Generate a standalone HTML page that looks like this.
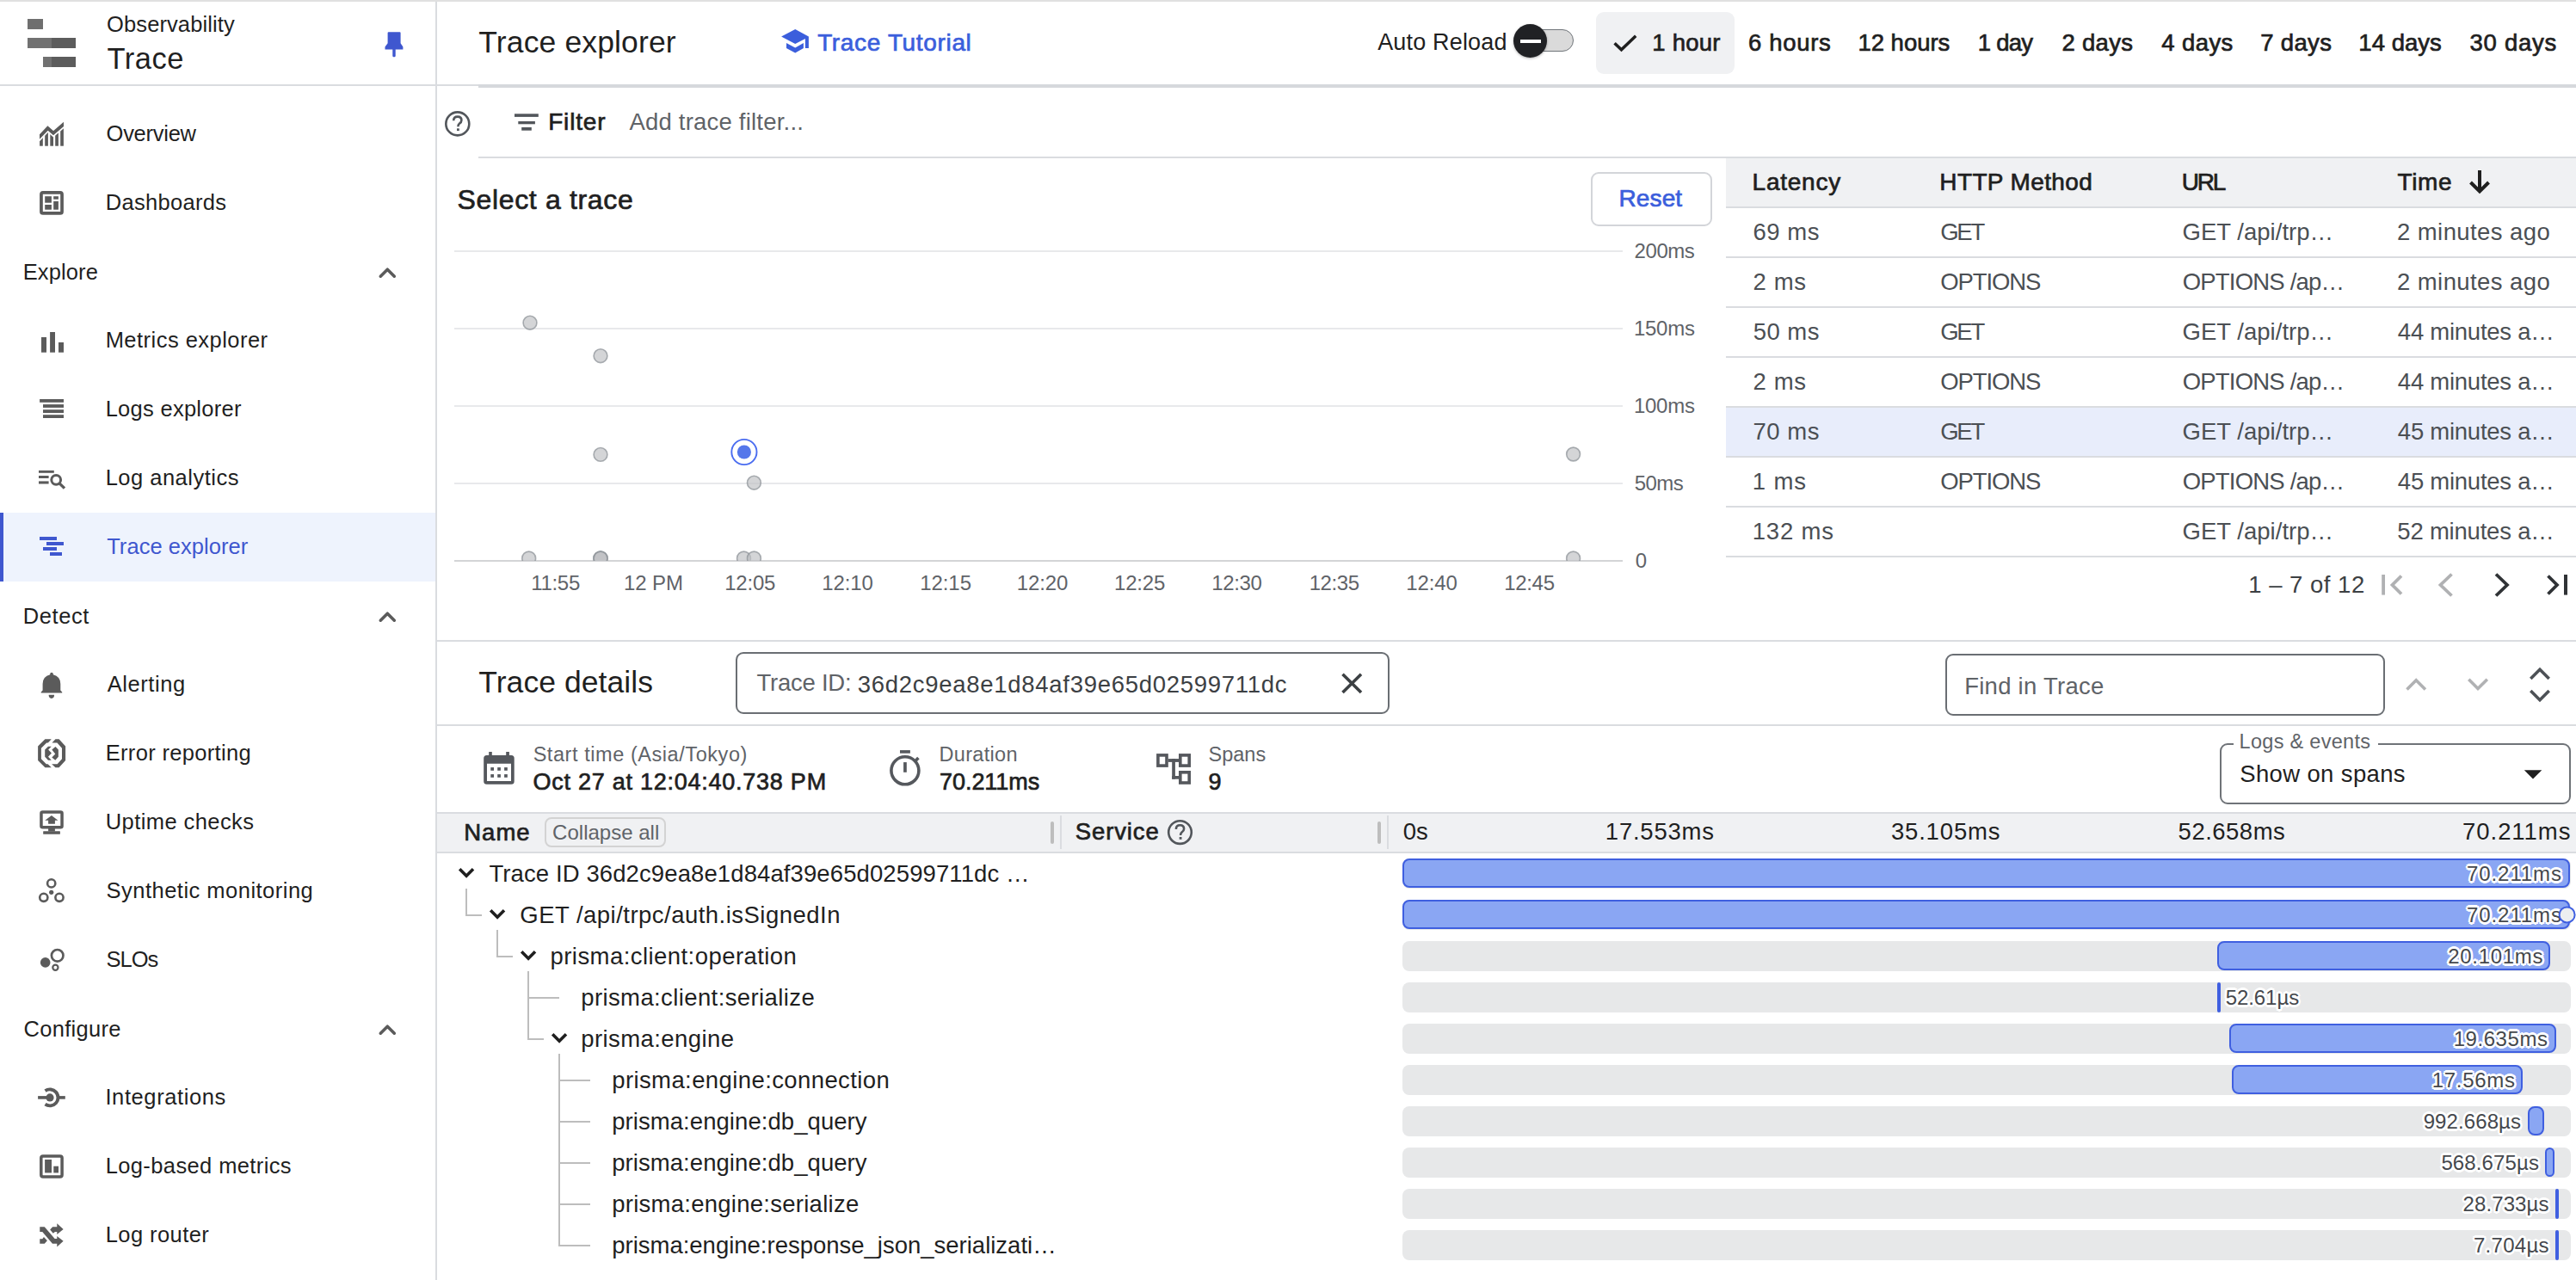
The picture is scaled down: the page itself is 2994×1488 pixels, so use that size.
<!DOCTYPE html>
<html><head><meta charset="utf-8"><style>
html,body{margin:0;padding:0;background:#fff;}
body{width:2994px;height:1488px;overflow:hidden;position:relative;font-family:"Liberation Sans",sans-serif;}
.t{position:absolute;white-space:nowrap;line-height:1;}
.r{position:absolute;}
.ol{text-shadow:2.6px 0 0 #fff,-2.6px 0 0 #fff,0 2.6px 0 #fff,0 -2.6px 0 #fff,1.9px 1.9px 0 #fff,-1.9px 1.9px 0 #fff,1.9px -1.9px 0 #fff,-1.9px -1.9px 0 #fff,1.3px 0 0 #fff,-1.3px 0 0 #fff,0 1.3px 0 #fff,0 -1.3px 0 #fff;}
#ic{position:absolute;left:0;top:0;}
</style></head><body>
<div class="r" style="left:0px;top:0px;width:2994.00px;height:2.00px;background:#e0e0e0;"></div>
<div class="r" style="left:506px;top:2px;width:2.00px;height:1486.00px;background:#dadce0;"></div>
<div class="r" style="left:0px;top:98px;width:556.00px;height:2.00px;background:#dadce0;"></div>
<div class="t" style="top:16.21px;font-size:25.5px;color:#1f1f1f;letter-spacing:0.105px;left:124.05px;">Observability</div>
<div class="t" style="top:51.29px;font-size:34.5px;color:#1f1f1f;letter-spacing:0.526px;left:124.51px;">Trace</div>
<div class="r" style="left:0px;top:596px;width:506.00px;height:80.00px;background:#eef3fd;"></div>
<div class="r" style="left:0px;top:596px;width:4.00px;height:80.00px;background:#3f57cf;"></div>
<div class="t" style="top:143.41px;font-size:25.5px;color:#1f1f1f;letter-spacing:-0.255px;left:123.55px;">Overview</div>
<div class="t" style="top:223.41px;font-size:25.5px;color:#1f1f1f;letter-spacing:0.321px;left:122.66px;">Dashboards</div>
<div class="t" style="top:304.21px;font-size:25.5px;color:#1f1f1f;letter-spacing:0.107px;left:26.76px;">Explore</div>
<div class="t" style="top:383.41px;font-size:25.5px;color:#1f1f1f;letter-spacing:0.468px;left:122.66px;">Metrics explorer</div>
<div class="t" style="top:463.41px;font-size:25.5px;color:#1f1f1f;letter-spacing:0.277px;left:122.66px;">Logs explorer</div>
<div class="t" style="top:543.41px;font-size:25.5px;color:#1f1f1f;letter-spacing:0.495px;left:122.66px;">Log analytics</div>
<div class="t" style="top:623.41px;font-size:25.5px;color:#3f57cf;letter-spacing:0.051px;left:124.19px;">Trace explorer</div>
<div class="t" style="top:704.21px;font-size:25.5px;color:#1f1f1f;letter-spacing:0.600px;left:26.76px;">Detect</div>
<div class="t" style="top:783.41px;font-size:25.5px;color:#1f1f1f;letter-spacing:0.573px;left:124.70px;">Alerting</div>
<div class="t" style="top:863.41px;font-size:25.5px;color:#1f1f1f;letter-spacing:0.332px;left:122.66px;">Error reporting</div>
<div class="t" style="top:943.41px;font-size:25.5px;color:#1f1f1f;letter-spacing:0.419px;left:122.79px;">Uptime checks</div>
<div class="t" style="top:1023.41px;font-size:25.5px;color:#1f1f1f;letter-spacing:0.483px;left:123.55px;">Synthetic monitoring</div>
<div class="t" style="top:1103.41px;font-size:25.5px;color:#1f1f1f;letter-spacing:-1.037px;left:123.55px;">SLOs</div>
<div class="t" style="top:1184.21px;font-size:25.5px;color:#1f1f1f;letter-spacing:0.297px;left:27.53px;">Configure</div>
<div class="t" style="top:1263.41px;font-size:25.5px;color:#1f1f1f;letter-spacing:0.605px;left:122.41px;">Integrations</div>
<div class="t" style="top:1343.41px;font-size:25.5px;color:#1f1f1f;letter-spacing:0.387px;left:122.66px;">Log-based metrics</div>
<div class="t" style="top:1423.41px;font-size:25.5px;color:#1f1f1f;letter-spacing:0.430px;left:122.66px;">Log router</div>
<div class="r" style="left:556px;top:98px;width:2438.00px;height:4.00px;background:#d6d8dc;"></div>
<div class="t" style="top:31.64px;font-size:35.5px;color:#1f1f1f;letter-spacing:0.143px;left:556.29px;">Trace explorer</div>
<div class="t" style="top:35.99px;font-size:28px;color:#3b5edc;letter-spacing:0.660px;left:950.14px;-webkit-text-stroke:0.7px #3b5edc;">Trace Tutorial</div>
<div class="t" style="top:36.14px;font-size:27px;color:#1f1f1f;letter-spacing:0.172px;left:1601.20px;">Auto Reload</div>
<div class="r" style="left:1764px;top:34.3px;width:63.10px;height:23.60px;border:1.8px solid #70757a;border-radius:14px;background:#dadada;"></div>
<div class="r" style="left:1759.1px;top:28.1px;width:39.4px;height:39.4px;border-radius:50%;background:#202124;box-shadow:0 1px 3px rgba(0,0,0,.3);"></div>
<div class="r" style="left:1767px;top:45.8px;width:24.00px;height:4.00px;background:#fff;"></div>
<div class="r" style="left:1855px;top:14.1px;width:161.00px;height:71.50px;border:0px solid transparent;border-radius:9px;background:#f0f1f3;"></div>
<div class="t" style="top:35.72px;font-size:27.5px;color:#1f1f1f;letter-spacing:0.243px;left:1920.34px;-webkit-text-stroke:0.7px #1f1f1f;">1 hour</div>
<div class="t" style="top:35.72px;font-size:27.5px;color:#1f1f1f;letter-spacing:0.704px;left:2031.92px;-webkit-text-stroke:0.7px #1f1f1f;">6 hours</div>
<div class="t" style="top:35.72px;font-size:27.5px;color:#1f1f1f;letter-spacing:-0.021px;left:2159.44px;-webkit-text-stroke:0.7px #1f1f1f;">12 hours</div>
<div class="t" style="top:35.72px;font-size:27.5px;color:#1f1f1f;letter-spacing:-0.744px;left:2298.74px;-webkit-text-stroke:0.7px #1f1f1f;">1 day</div>
<div class="t" style="top:35.72px;font-size:27.5px;color:#1f1f1f;letter-spacing:0.310px;left:2396.43px;-webkit-text-stroke:0.7px #1f1f1f;">2 days</div>
<div class="t" style="top:35.72px;font-size:27.5px;color:#1f1f1f;letter-spacing:0.405px;left:2512.25px;-webkit-text-stroke:0.7px #1f1f1f;">4 days</div>
<div class="t" style="top:35.72px;font-size:27.5px;color:#1f1f1f;letter-spacing:0.310px;left:2627.32px;-webkit-text-stroke:0.7px #1f1f1f;">7 days</div>
<div class="t" style="top:35.72px;font-size:27.5px;color:#1f1f1f;letter-spacing:0.023px;left:2741.34px;-webkit-text-stroke:0.7px #1f1f1f;">14 days</div>
<div class="t" style="top:35.72px;font-size:27.5px;color:#1f1f1f;letter-spacing:0.712px;left:2870.60px;-webkit-text-stroke:0.7px #1f1f1f;">30 days</div>
<div class="r" style="left:556px;top:182px;width:2438.00px;height:2.00px;background:#dadce0;"></div>
<div class="t" style="top:127.59px;font-size:28px;color:#1f1f1f;letter-spacing:0.840px;left:637.16px;-webkit-text-stroke:0.7px #1f1f1f;">Filter</div>
<div class="t" style="top:128.02px;font-size:27.5px;color:#5f6368;letter-spacing:0.210px;left:731.40px;">Add trace filter...</div>
<div class="t" style="top:216.41px;font-size:32px;color:#1f1f1f;letter-spacing:0.654px;left:531.56px;-webkit-text-stroke:0.7px #1f1f1f;">Select a trace</div>
<div class="r" style="left:1849.4px;top:200.3px;width:136.30px;height:59.10px;border:2px solid #d3d5d9;border-radius:9px;background:transparent;"></div>
<div class="t" style="top:217.19px;font-size:28px;color:#3b5edc;letter-spacing:0.125px;left:1881.51px;-webkit-text-stroke:0.7px #3b5edc;">Reset</div>
<div class="r" style="left:528px;top:291px;width:1358.00px;height:2.00px;background:#e8e9eb;"></div>
<div class="r" style="left:528px;top:381px;width:1358.00px;height:2.00px;background:#e8e9eb;"></div>
<div class="r" style="left:528px;top:471px;width:1358.00px;height:2.00px;background:#e8e9eb;"></div>
<div class="r" style="left:528px;top:561px;width:1358.00px;height:2.00px;background:#e8e9eb;"></div>
<div class="r" style="left:528px;top:651px;width:1358.00px;height:2.00px;background:#d3d4d6;"></div>
<div class="t" style="top:280.18px;font-size:24px;color:#5f6368;letter-spacing:-0.440px;left:1899.60px;">200ms</div>
<div class="t" style="top:370.18px;font-size:24px;color:#5f6368;letter-spacing:-0.290px;left:1899.00px;">150ms</div>
<div class="t" style="top:460.18px;font-size:24px;color:#5f6368;letter-spacing:-0.290px;left:1899.00px;">100ms</div>
<div class="t" style="top:550.18px;font-size:24px;color:#5f6368;letter-spacing:-0.593px;left:1899.84px;">50ms</div>
<div class="t" style="top:640.18px;font-size:24px;color:#5f6368;left:1900.80px;">0</div>
<div class="t" style="top:666.18px;font-size:24px;color:#5f6368;letter-spacing:-0.310px;left:617.20px;">11:55</div>
<div class="t" style="top:666.18px;font-size:24px;color:#5f6368;letter-spacing:-0.055px;left:724.90px;">12 PM</div>
<div class="t" style="top:666.18px;font-size:24px;color:#5f6368;letter-spacing:-0.210px;left:842.20px;">12:05</div>
<div class="t" style="top:666.18px;font-size:24px;color:#5f6368;letter-spacing:-0.115px;left:955.20px;">12:10</div>
<div class="t" style="top:666.18px;font-size:24px;color:#5f6368;letter-spacing:-0.060px;left:1069.20px;">12:15</div>
<div class="t" style="top:666.18px;font-size:24px;color:#5f6368;letter-spacing:-0.115px;left:1181.80px;">12:20</div>
<div class="t" style="top:666.18px;font-size:24px;color:#5f6368;letter-spacing:-0.185px;left:1295.00px;">12:25</div>
<div class="t" style="top:666.18px;font-size:24px;color:#5f6368;letter-spacing:-0.340px;left:1408.20px;">12:30</div>
<div class="t" style="top:666.18px;font-size:24px;color:#5f6368;letter-spacing:-0.435px;left:1521.70px;">12:35</div>
<div class="t" style="top:666.18px;font-size:24px;color:#5f6368;letter-spacing:-0.090px;left:1634.20px;">12:40</div>
<div class="t" style="top:666.18px;font-size:24px;color:#5f6368;letter-spacing:-0.310px;left:1748.20px;">12:45</div>
<div class="r" style="left:2006px;top:184px;width:988.00px;height:56.00px;background:#f0f1f3;"></div>
<div class="r" style="left:2006px;top:240px;width:988.00px;height:2.00px;background:#dadce0;"></div>
<div class="t" style="top:197.89px;font-size:28px;color:#1f1f1f;letter-spacing:0.767px;left:2036.56px;-webkit-text-stroke:0.7px #1f1f1f;">Latency</div>
<div class="t" style="top:197.89px;font-size:28px;color:#1f1f1f;letter-spacing:0.362px;left:2254.36px;-webkit-text-stroke:0.7px #1f1f1f;">HTTP Method</div>
<div class="t" style="top:197.89px;font-size:28px;color:#1f1f1f;letter-spacing:-2.230px;left:2535.80px;-webkit-text-stroke:0.7px #1f1f1f;">URL</div>
<div class="t" style="top:197.89px;font-size:28px;color:#1f1f1f;letter-spacing:0.647px;left:2786.44px;-webkit-text-stroke:0.7px #1f1f1f;">Time</div>
<div class="r" style="left:2006px;top:472px;width:988.00px;height:58.00px;background:#e8edfb;"></div>
<div class="t" style="top:255.92px;font-size:27.5px;color:#4b4f54;letter-spacing:0.525px;left:2037.42px;">69 ms</div>
<div class="t" style="top:255.92px;font-size:27.5px;color:#4b4f54;letter-spacing:-2.244px;left:2255.22px;">GET</div>
<div class="t" style="top:255.92px;font-size:27.5px;color:#4b4f54;letter-spacing:0.023px;left:2536.53px;">GET /api/trp…</div>
<div class="t" style="top:255.92px;font-size:27.5px;color:#4b4f54;letter-spacing:0.415px;left:2786.03px;">2 minutes ago</div>
<div class="r" style="left:2006px;top:298px;width:988.00px;height:2.00px;background:#dadce0;"></div>
<div class="t" style="top:313.92px;font-size:27.5px;color:#4b4f54;letter-spacing:0.667px;left:2037.42px;">2 ms</div>
<div class="t" style="top:313.92px;font-size:27.5px;color:#4b4f54;letter-spacing:-1.146px;left:2255.36px;">OPTIONS</div>
<div class="t" style="top:313.92px;font-size:27.5px;color:#4b4f54;letter-spacing:-0.793px;left:2536.66px;">OPTIONS /ap…</div>
<div class="t" style="top:313.92px;font-size:27.5px;color:#4b4f54;letter-spacing:0.415px;left:2786.03px;">2 minutes ago</div>
<div class="r" style="left:2006px;top:356px;width:988.00px;height:2.00px;background:#dadce0;"></div>
<div class="t" style="top:371.92px;font-size:27.5px;color:#4b4f54;letter-spacing:0.456px;left:2037.70px;">50 ms</div>
<div class="t" style="top:371.92px;font-size:27.5px;color:#4b4f54;letter-spacing:-2.244px;left:2255.22px;">GET</div>
<div class="t" style="top:371.92px;font-size:27.5px;color:#4b4f54;letter-spacing:0.023px;left:2536.53px;">GET /api/trp…</div>
<div class="t" style="top:371.92px;font-size:27.5px;color:#4b4f54;letter-spacing:-0.256px;left:2786.85px;">44 minutes a…</div>
<div class="r" style="left:2006px;top:414px;width:988.00px;height:2.00px;background:#dadce0;"></div>
<div class="t" style="top:429.92px;font-size:27.5px;color:#4b4f54;letter-spacing:0.667px;left:2037.42px;">2 ms</div>
<div class="t" style="top:429.92px;font-size:27.5px;color:#4b4f54;letter-spacing:-1.146px;left:2255.36px;">OPTIONS</div>
<div class="t" style="top:429.92px;font-size:27.5px;color:#4b4f54;letter-spacing:-0.793px;left:2536.66px;">OPTIONS /ap…</div>
<div class="t" style="top:429.92px;font-size:27.5px;color:#4b4f54;letter-spacing:-0.256px;left:2786.85px;">44 minutes a…</div>
<div class="r" style="left:2006px;top:472px;width:988.00px;height:2.00px;background:#dadce0;"></div>
<div class="t" style="top:487.92px;font-size:27.5px;color:#4b4f54;letter-spacing:0.525px;left:2037.42px;">70 ms</div>
<div class="t" style="top:487.92px;font-size:27.5px;color:#4b4f54;letter-spacing:-2.244px;left:2255.22px;">GET</div>
<div class="t" style="top:487.92px;font-size:27.5px;color:#4b4f54;letter-spacing:0.023px;left:2536.53px;">GET /api/trp…</div>
<div class="t" style="top:487.92px;font-size:27.5px;color:#4b4f54;letter-spacing:-0.256px;left:2786.85px;">45 minutes a…</div>
<div class="r" style="left:2006px;top:530px;width:988.00px;height:2.00px;background:#dadce0;"></div>
<div class="t" style="top:545.92px;font-size:27.5px;color:#4b4f54;letter-spacing:0.896px;left:2036.74px;">1 ms</div>
<div class="t" style="top:545.92px;font-size:27.5px;color:#4b4f54;letter-spacing:-1.146px;left:2255.36px;">OPTIONS</div>
<div class="t" style="top:545.92px;font-size:27.5px;color:#4b4f54;letter-spacing:-0.793px;left:2536.66px;">OPTIONS /ap…</div>
<div class="t" style="top:545.92px;font-size:27.5px;color:#4b4f54;letter-spacing:-0.256px;left:2786.85px;">45 minutes a…</div>
<div class="r" style="left:2006px;top:588px;width:988.00px;height:2.00px;background:#dadce0;"></div>
<div class="t" style="top:603.92px;font-size:27.5px;color:#4b4f54;letter-spacing:0.805px;left:2036.74px;">132 ms</div>
<div class="t" style="top:603.92px;font-size:27.5px;color:#4b4f54;letter-spacing:0.023px;left:2536.53px;">GET /api/trp…</div>
<div class="t" style="top:603.92px;font-size:27.5px;color:#4b4f54;letter-spacing:-0.210px;left:2786.30px;">52 minutes a…</div>
<div class="r" style="left:2006px;top:646px;width:988.00px;height:2.00px;background:#dadce0;"></div>
<div class="t" style="top:665.72px;font-size:27.5px;color:#3c4043;letter-spacing:0.500px;left:2613.24px;">1 – 7 of 12</div>
<div class="r" style="left:508px;top:744px;width:2486.00px;height:2.00px;background:#dadce0;"></div>
<div class="t" style="top:776.34px;font-size:35.5px;color:#1f1f1f;letter-spacing:0.063px;left:556.29px;">Trace details</div>
<div class="r" style="left:855px;top:758px;width:755.50px;height:68.00px;border:2px solid #6a6e73;border-radius:9px;background:transparent;"></div>
<div class="t" style="top:780.22px;font-size:27.5px;color:#5f6368;letter-spacing:-0.238px;left:879.45px;">Trace ID:</div>
<div class="t" style="top:781.82px;font-size:27.5px;color:#3c4043;letter-spacing:0.719px;left:996.70px;">36d2c9ea8e1d84af39e65d02599711dc</div>
<div class="r" style="left:2260.5px;top:760px;width:507.00px;height:68.00px;border:2px solid #6a6e73;border-radius:9px;background:transparent;"></div>
<div class="t" style="top:784.02px;font-size:27.5px;color:#5f6368;letter-spacing:0.257px;left:2283.20px;">Find in Trace</div>
<div class="r" style="left:508px;top:842px;width:2486.00px;height:2.00px;background:#dadce0;"></div>
<div class="t" style="top:866.20px;font-size:23.5px;color:#5f6368;letter-spacing:0.562px;left:619.64px;">Start time (Asia/Tokyo)</div>
<div class="t" style="top:896.04px;font-size:27px;color:#1f1f1f;letter-spacing:0.747px;left:619.49px;-webkit-text-stroke:0.7px #1f1f1f;">Oct 27 at 12:04:40.738 PM</div>
<div class="t" style="top:865.90px;font-size:23.5px;color:#5f6368;letter-spacing:0.311px;left:1091.52px;">Duration</div>
<div class="t" style="top:895.74px;font-size:27px;color:#1f1f1f;letter-spacing:-0.064px;left:1092.05px;-webkit-text-stroke:0.7px #1f1f1f;">70.211ms</div>
<div class="t" style="top:865.90px;font-size:23.5px;color:#5f6368;left:1404.50px;">Spans</div>
<div class="t" style="top:895.74px;font-size:27px;color:#1f1f1f;left:1404.50px;-webkit-text-stroke:0.7px #1f1f1f;">9</div>
<div class="r" style="left:2580.2px;top:864.4px;width:403.90px;height:67.10px;border:2px solid #6f7378;border-radius:9px;background:transparent;"></div>
<div class="r" style="left:2595.7px;top:860px;width:168.30px;height:10.00px;background:#fff;"></div>
<div class="t" style="top:851.20px;font-size:23.5px;color:#5f6368;letter-spacing:0.293px;left:2602.62px;">Logs &amp; events</div>
<div class="t" style="top:885.92px;font-size:27.5px;color:#1f1f1f;letter-spacing:0.358px;left:2603.26px;">Show on spans</div>
<div class="r" style="left:508px;top:944px;width:2486.00px;height:2.00px;background:#dadce0;"></div>
<div class="r" style="left:508px;top:946px;width:2486.00px;height:44.00px;background:#f0f1f3;"></div>
<div class="r" style="left:508px;top:990px;width:2486.00px;height:2.00px;background:#dadce0;"></div>
<div class="t" style="top:953.52px;font-size:27.5px;color:#1f1f1f;letter-spacing:1.017px;left:539.20px;-webkit-text-stroke:0.7px #1f1f1f;">Name</div>
<div class="r" style="left:632.5px;top:950.3px;width:137.80px;height:31.20px;border:2px solid #d3d3d3;border-radius:8px;background:transparent;"></div>
<div class="t" style="top:955.88px;font-size:24px;color:#5f6368;letter-spacing:0.009px;left:642.10px;">Collapse all</div>
<div class="r" style="left:1221.3px;top:954.5px;width:3.70px;height:26.50px;background:#bdbdbd;border-radius:2px;"></div>
<div class="r" style="left:1232px;top:948px;width:2.00px;height:39.30px;background:#dadce0;"></div>
<div class="t" style="top:953.12px;font-size:27.5px;color:#1f1f1f;letter-spacing:0.877px;left:1249.76px;-webkit-text-stroke:0.7px #1f1f1f;">Service</div>
<div class="r" style="left:1601.3px;top:954.5px;width:3.70px;height:26.50px;background:#bdbdbd;border-radius:2px;"></div>
<div class="r" style="left:1612px;top:948px;width:2.00px;height:39.30px;background:#dadce0;"></div>
<div class="t" style="top:953.22px;font-size:27.5px;color:#1f1f1f;left:1630.80px;">0s</div>
<div class="t" style="top:953.22px;font-size:27.5px;color:#1f1f1f;letter-spacing:0.771px;left:1865.84px;">17.553ms</div>
<div class="t" style="top:953.22px;font-size:27.5px;color:#1f1f1f;letter-spacing:0.834px;left:2197.90px;">35.105ms</div>
<div class="t" style="top:953.22px;font-size:27.5px;color:#1f1f1f;letter-spacing:0.491px;left:2531.60px;">52.658ms</div>
<div class="t" style="top:953.22px;font-size:27.5px;color:#1f1f1f;letter-spacing:0.934px;left:2862.12px;">70.211ms</div>
<div class="t" style="top:1002.32px;font-size:27.5px;color:#1f1f1f;letter-spacing:0.103px;left:568.45px;">Trace ID 36d2c9ea8e1d84af39e65d02599711dc …</div>
<div class="t" style="top:1050.32px;font-size:27.5px;color:#1f1f1f;letter-spacing:0.479px;left:604.33px;">GET /api/trpc/auth.isSignedIn</div>
<div class="t" style="top:1098.32px;font-size:27.5px;color:#1f1f1f;letter-spacing:0.442px;left:639.51px;">prisma:client:operation</div>
<div class="t" style="top:1146.32px;font-size:27.5px;color:#1f1f1f;letter-spacing:0.392px;left:675.21px;">prisma:client:serialize</div>
<div class="t" style="top:1194.32px;font-size:27.5px;color:#1f1f1f;letter-spacing:0.427px;left:675.21px;">prisma:engine</div>
<div class="t" style="top:1242.32px;font-size:27.5px;color:#1f1f1f;letter-spacing:0.401px;left:711.21px;">prisma:engine:connection</div>
<div class="t" style="top:1290.32px;font-size:27.5px;color:#1f1f1f;letter-spacing:0.063px;left:711.21px;">prisma:engine:db_query</div>
<div class="t" style="top:1338.32px;font-size:27.5px;color:#1f1f1f;letter-spacing:0.063px;left:711.21px;">prisma:engine:db_query</div>
<div class="t" style="top:1386.32px;font-size:27.5px;color:#1f1f1f;letter-spacing:0.261px;left:711.21px;">prisma:engine:serialize</div>
<div class="t" style="top:1434.32px;font-size:27.5px;color:#1f1f1f;letter-spacing:-0.006px;left:711.21px;">prisma:engine:response_json_serializati…</div>
<div class="r" style="left:541px;top:1033px;width:2.00px;height:32.00px;background:#bdbdbd;"></div>
<div class="r" style="left:541px;top:1063px;width:19.00px;height:2.00px;background:#bdbdbd;"></div>
<div class="r" style="left:577px;top:1081px;width:2.00px;height:32.00px;background:#bdbdbd;"></div>
<div class="r" style="left:577px;top:1111px;width:19.00px;height:2.00px;background:#bdbdbd;"></div>
<div class="r" style="left:613px;top:1129px;width:2.00px;height:80.00px;background:#bdbdbd;"></div>
<div class="r" style="left:613px;top:1159px;width:37.00px;height:2.00px;background:#bdbdbd;"></div>
<div class="r" style="left:613px;top:1207px;width:19.00px;height:2.00px;background:#bdbdbd;"></div>
<div class="r" style="left:649px;top:1225px;width:2.00px;height:224.00px;background:#bdbdbd;"></div>
<div class="r" style="left:649px;top:1255px;width:37.00px;height:2.00px;background:#bdbdbd;"></div>
<div class="r" style="left:649px;top:1303px;width:37.00px;height:2.00px;background:#bdbdbd;"></div>
<div class="r" style="left:649px;top:1351px;width:37.00px;height:2.00px;background:#bdbdbd;"></div>
<div class="r" style="left:649px;top:1399px;width:37.00px;height:2.00px;background:#bdbdbd;"></div>
<div class="r" style="left:649px;top:1447px;width:37.00px;height:2.00px;background:#bdbdbd;"></div>
<div class="r" style="left:1629.8px;top:998.2px;width:1358.20px;height:35.20px;background:#e7e8e9;border-radius:8px;"></div>
<div class="r" style="left:1629.8px;top:998.2px;width:1353.20px;height:30.20px;border:2.5px solid #3f5fe0;border-radius:8px;background:#8aa6f3;"></div>
<div class="t ol" style="top:1004.08px;font-size:24px;color:#45484d;letter-spacing:0.909px;right:16.09px;">70.211ms</div>
<div class="r" style="left:1629.8px;top:1046.2px;width:1358.20px;height:35.20px;background:#e7e8e9;border-radius:8px;"></div>
<div class="r" style="left:1629.8px;top:1046.2px;width:1353.20px;height:30.20px;border:2.5px solid #3f5fe0;border-radius:8px;background:#8aa6f3;"></div>
<div class="t ol" style="top:1052.08px;font-size:24px;color:#45484d;letter-spacing:0.909px;right:16.09px;">70.211ms</div>
<div class="r" style="left:1629.8px;top:1094.2px;width:1358.20px;height:35.20px;background:#e7e8e9;border-radius:8px;"></div>
<div class="r" style="left:2576.7px;top:1094.2px;width:383.60px;height:30.20px;border:2.5px solid #3f5fe0;border-radius:8px;background:#8aa6f3;"></div>
<div class="t ol" style="top:1100.08px;font-size:24px;color:#45484d;letter-spacing:0.697px;right:37.80px;">20.101ms</div>
<div class="r" style="left:1629.8px;top:1142.2px;width:1358.20px;height:35.20px;background:#e7e8e9;border-radius:8px;"></div>
<div class="r" style="left:2576.7px;top:1142.2px;width:4.00px;height:35.20px;background:#3f5fe0;border-radius:2px;"></div>
<div class="t ol" style="top:1148.08px;font-size:24px;color:#45484d;letter-spacing:-0.053px;left:2586.64px;">52.61µs</div>
<div class="r" style="left:1629.8px;top:1190.2px;width:1358.20px;height:35.20px;background:#e7e8e9;border-radius:8px;"></div>
<div class="r" style="left:2591.3px;top:1190.2px;width:375.40px;height:30.20px;border:2.5px solid #3f5fe0;border-radius:8px;background:#8aa6f3;"></div>
<div class="t ol" style="top:1196.08px;font-size:24px;color:#45484d;letter-spacing:0.569px;right:32.43px;">19.635ms</div>
<div class="r" style="left:1629.8px;top:1238.2px;width:1358.20px;height:35.20px;background:#e7e8e9;border-radius:8px;"></div>
<div class="r" style="left:2593.5px;top:1238.2px;width:334.30px;height:30.20px;border:2.5px solid #3f5fe0;border-radius:8px;background:#8aa6f3;"></div>
<div class="t ol" style="top:1244.08px;font-size:24px;color:#45484d;letter-spacing:0.700px;right:70.30px;">17.56ms</div>
<div class="r" style="left:1629.8px;top:1286.2px;width:1358.20px;height:35.20px;background:#e7e8e9;border-radius:8px;"></div>
<div class="r" style="left:2938.2px;top:1286.2px;width:14.50px;height:30.20px;border:2.5px solid #3f5fe0;border-radius:8px;background:#8aa6f3;"></div>
<div class="t ol" style="top:1292.08px;font-size:24px;color:#45484d;letter-spacing:0.095px;right:63.91px;">992.668µs</div>
<div class="r" style="left:1629.8px;top:1334.2px;width:1358.20px;height:35.20px;background:#e7e8e9;border-radius:8px;"></div>
<div class="r" style="left:2958px;top:1334.2px;width:7.00px;height:30.20px;border:2.5px solid #3f5fe0;border-radius:8px;background:#8aa6f3;"></div>
<div class="t ol" style="top:1340.08px;font-size:24px;color:#45484d;letter-spacing:0.130px;right:42.87px;">568.675µs</div>
<div class="r" style="left:1629.8px;top:1382.2px;width:1358.20px;height:35.20px;background:#e7e8e9;border-radius:8px;"></div>
<div class="r" style="left:2970px;top:1382.2px;width:4.00px;height:35.20px;background:#3f5fe0;border-radius:2px;"></div>
<div class="t ol" style="top:1388.08px;font-size:24px;color:#45484d;letter-spacing:0.100px;right:31.40px;">28.733µs</div>
<div class="r" style="left:1629.8px;top:1430.2px;width:1358.20px;height:35.20px;background:#e7e8e9;border-radius:8px;"></div>
<div class="r" style="left:2970px;top:1430.2px;width:4.00px;height:35.20px;background:#3f5fe0;border-radius:2px;"></div>
<div class="t ol" style="top:1436.08px;font-size:24px;color:#45484d;letter-spacing:0.270px;right:31.23px;">7.704µs</div>
<svg id="ic" width="2994" height="1488" viewBox="0 0 2994 1488">
<rect x="32" y="22" width="18.00" height="12.00" rx="0" fill="#6f6f6f"/>
<rect x="32" y="44" width="28.00" height="12.00" rx="0" fill="#717171"/>
<rect x="60" y="44" width="28.00" height="12.00" rx="0" fill="#5c5c5c"/>
<rect x="50" y="66" width="10.00" height="12.00" rx="0" fill="#717171"/>
<rect x="60" y="66" width="28.00" height="12.00" rx="0" fill="#5c5c5c"/>
<path d="M451.6 37.2 H464.6 Q465.6 37.2 465.6 38.2 V50.3 L468.4 54.4 V57.5 H459.7 V65.5 L458 66.5 L456.3 65.5 V57.5 H447.5 V54.4 L450.6 50.3 V38.2 Q450.6 37.2 451.6 37.2 Z" fill="#3f57cf"/>
<rect x="46.1" y="155" width="3.70" height="14.70" rx="0" fill="#5b5b5b"/>
<rect x="52.2" y="149" width="3.70" height="20.70" rx="0" fill="#5b5b5b"/>
<rect x="58.3" y="151" width="3.70" height="18.70" rx="0" fill="#5b5b5b"/>
<rect x="64.2" y="149.5" width="3.70" height="20.20" rx="0" fill="#5b5b5b"/>
<rect x="70.2" y="144.6" width="3.70" height="25.10" rx="0" fill="#5b5b5b"/>
<defs><clipPath id="ovc"><rect x="46.1" y="130" width="27.8" height="45"/></clipPath></defs>
<g clip-path="url(#ovc)"><path d="M42 163.2 L55.5 149.05 L62 154.7 L78 140.9" fill="none" stroke="#fff" stroke-width="7.4"/><path d="M42 163.2 L55.5 149.05 L62 154.7 L78 140.9" fill="none" stroke="#5b5b5b" stroke-width="3.9"/></g>
<rect x="47.95" y="223.95" width="24.1" height="23.95" rx="2" fill="none" stroke="#5b5b5b" stroke-width="3.7"/>
<rect x="52.2" y="228.2" width="7.70" height="7.50" rx="0" fill="#5b5b5b"/>
<rect x="52.2" y="238" width="7.70" height="5.70" rx="0" fill="#5b5b5b"/>
<rect x="62.2" y="228.2" width="5.70" height="3.50" rx="0" fill="#5b5b5b"/>
<rect x="62.2" y="234" width="5.70" height="9.70" rx="0" fill="#5b5b5b"/>
<path d="M442.3 321.2 L450.3 313.2 L458.3 321.2" fill="none" stroke="#5b5b5b" stroke-width="3.6" stroke-linecap="round" stroke-linejoin="round"/>
<rect x="48" y="392" width="6.00" height="17.70" rx="0" fill="#5b5b5b"/>
<rect x="58.1" y="386" width="5.90" height="23.70" rx="0" fill="#5b5b5b"/>
<rect x="68" y="398" width="6.00" height="11.70" rx="0" fill="#5b5b5b"/>
<rect x="46.1" y="464" width="27.90" height="3.80" rx="0" fill="#5b5b5b"/>
<rect x="50" y="470.1" width="24.00" height="3.80" rx="0" fill="#5b5b5b"/>
<rect x="50" y="476.2" width="24.00" height="3.80" rx="0" fill="#5b5b5b"/>
<rect x="50" y="482.2" width="24.00" height="3.80" rx="0" fill="#5b5b5b"/>
<rect x="45" y="546.9" width="17.80" height="2.90" rx="0" fill="#5b5b5b"/>
<rect x="45" y="553" width="11.60" height="3.00" rx="0" fill="#5b5b5b"/>
<rect x="45" y="559.4" width="11.60" height="3.10" rx="0" fill="#5b5b5b"/>
<circle cx="65.2" cy="557.8" r="5.4" fill="none" stroke="#5b5b5b" stroke-width="3"/>
<path d="M68.8 561.6 L75 567.6" fill="none" stroke="#5b5b5b" stroke-width="3.4" />
<rect x="46" y="624" width="20.00" height="4.00" rx="0" fill="#3f57cf"/>
<rect x="54" y="630" width="20.00" height="4.00" rx="0" fill="#3f57cf"/>
<rect x="50" y="636" width="16.00" height="4.00" rx="0" fill="#3f57cf"/>
<rect x="58" y="642" width="14.00" height="4.00" rx="0" fill="#3f57cf"/>
<path d="M442.3 721.2 L450.3 713.2 L458.3 721.2" fill="none" stroke="#5b5b5b" stroke-width="3.6" stroke-linecap="round" stroke-linejoin="round"/>
<path d="M60 781.7 Q61.8 781.7 61.8 783.5 V784.3 Q70.3 786.5 70.3 795 V802.5 L72.2 804.5 V805.6 H47.7 V804.5 L49.6 802.5 V795 Q49.6 786.5 58.2 784.3 V783.5 Q58.2 781.7 60 781.7 Z" fill="#5b5b5b"/>
<path d="M56.6 807.8 H63.1 Q63.1 811.9 59.85 811.9 Q56.6 811.9 56.6 807.8 Z" fill="#5b5b5b"/>
<path d="M52.39 859.19 L59.76 859.19 L55.81 863.51 L54.19 863.51 L47.89 869.63 L47.89 882.22 L53.83 888.15 L55.63 888.15 L59.76 892.29 L52.39 892.29 L44.12 884.01 L44.12 867.47 Z" fill="#5b5b5b"/>
<path d="M64.44 859.19 L68.58 859.19 L76.13 867.47 L76.13 884.01 L68.58 892.29 L64.44 892.29 L60.12 888.15 L66.6 888.15 L71.99 882.22 L71.99 869.63 L66.42 863.51 L60.48 863.51 Z" fill="#5b5b5b"/>
<path d="M55.99 867.83 L59.76 867.83 L56.17 871.6 L59.94 875.56 L55.99 879.7 L59.76 883.83 L55.99 883.83 L52.21 879.7 L52.21 871.6 Z" fill="#5b5b5b"/>
<path d="M64.44 868.01 L67.86 871.6 L67.86 879.7 L64.26 883.83 L60.3 880.6 L64.26 876.46 L60.3 871.6 Z" fill="#5b5b5b"/>
<rect x="47.95" y="944" width="24.1" height="17.8" rx="1.5" fill="none" stroke="#5b5b5b" stroke-width="3.5"/>
<path d="M59.9 948.1 L67.5 953.75 H63.9 V957.7 H56.1 V953.75 H52.2 Z" fill="#5b5b5b"/>
<rect x="56.1" y="963" width="7.80" height="3.50" rx="0" fill="#5b5b5b"/>
<rect x="50.2" y="966.25" width="19.70" height="3.45" rx="0.5" fill="#5b5b5b"/>
<circle cx="59.7" cy="1026.9" r="4.6" fill="none" stroke="#5b5b5b" stroke-width="2.6"/>
<circle cx="50.8" cy="1043.3" r="4.6" fill="none" stroke="#5b5b5b" stroke-width="2.6"/>
<circle cx="69" cy="1043.3" r="4.6" fill="none" stroke="#5b5b5b" stroke-width="2.6"/>
<circle cx="59.7" cy="1037.3" r="2.6" fill="#5b5b5b"/>
<circle cx="52.7" cy="1118.9" r="5.8" fill="#5b5b5b"/>
<circle cx="66.7" cy="1110.8" r="6.8" fill="none" stroke="#5b5b5b" stroke-width="2.7"/>
<circle cx="64.4" cy="1124.8" r="3.1" fill="none" stroke="#5b5b5b" stroke-width="2.2"/>
<path d="M442.3 1201.2 L450.3 1193.2 L458.3 1201.2" fill="none" stroke="#5b5b5b" stroke-width="3.6" stroke-linecap="round" stroke-linejoin="round"/>
<rect x="44.1" y="1274.1" width="10.90" height="3.60" rx="0" fill="#5b5b5b"/>
<rect x="67" y="1274.1" width="8.80" height="3.60" rx="0" fill="#5b5b5b"/>
<circle cx="58" cy="1275.9" r="4.6" fill="#5b5b5b"/>
<path d="M52.55 1268.1 A 9.5 9.5 0 1 1 52.55 1283.7" fill="none" stroke="#5b5b5b" stroke-width="3.9" />
<rect x="47.8" y="1343.9" width="24.3" height="24" rx="2.2" fill="none" stroke="#5b5b5b" stroke-width="3.5"/>
<rect x="52.1" y="1348" width="7.90" height="15.40" rx="0" fill="#5b5b5b"/>
<rect x="62.3" y="1355.7" width="5.70" height="7.70" rx="0" fill="#5b5b5b"/>
<path d="M46.28 1426.25 L51.75 1426.25 L63.63 1440 L66.28 1440 L66.28 1436.9 L73.63 1442.8 L66.28 1449.4 L66.28 1445.8 L60.97 1445.8 L49.25 1431.9 L46.28 1431.9 Z" fill="#5b5b5b"/>
<path d="M58.16 1429.4 L61.13 1426.25 L66.28 1426.25 L66.28 1422.2 L73.63 1428.9 L66.28 1435 L66.28 1431.9 L63.94 1431.9 L61.75 1433.75 Z" fill="#5b5b5b"/>
<path d="M46.28 1440.2 L49.25 1440.2 L50.97 1438.1 L54.88 1442.2 L51.75 1445.8 L46.28 1445.8 Z" fill="#5b5b5b"/>
<path d="M908.1 42.4 L924.25 34.1 L939.9 42.4 V55.9 H935.9 V44.9 L924.25 51 Z" fill="#3b5edc"/>
<path d="M914 50 L924.25 55.6 L933.9 50 V55.9 L924.25 61.6 L914 55.9 Z" fill="#3b5edc"/>
<path d="M1876.6 50.2 L1884.5 57.8 L1901.2 41.8" fill="none" stroke="#1f1f1f" stroke-width="3.5" />
<circle cx="531.8" cy="143.9" r="13.5" fill="none" stroke="#52565b" stroke-width="2.6"/>
<path d="M527.2 140.2 Q527.2 135.6 531.9 135.6 Q536.4 135.6 536.4 139.8 Q536.4 142.2 534 143.6 Q532.4 144.6 532.4 147.3" fill="none" stroke="#52565b" stroke-width="2.6" />
<rect x="531" y="149.3" width="2.80" height="2.80" rx="0" fill="#52565b"/>
<rect x="598" y="132.3" width="27.80" height="3.60" rx="0" fill="#52565b"/>
<rect x="602.3" y="141" width="19.60" height="3.30" rx="0" fill="#52565b"/>
<rect x="606.2" y="148" width="11.60" height="3.70" rx="0" fill="#52565b"/>
<defs><clipPath id="cp"><rect x="500" y="280" width="1400" height="372"/></clipPath></defs>
<circle cx="616" cy="375.2" r="7.9" fill="#bfc1c4" fill-opacity="0.68" stroke="#8f9499" stroke-opacity="0.75" stroke-width="1.6"/>
<circle cx="698" cy="413.7" r="7.9" fill="#bfc1c4" fill-opacity="0.68" stroke="#8f9499" stroke-opacity="0.75" stroke-width="1.6"/>
<circle cx="698" cy="528.4" r="7.9" fill="#bfc1c4" fill-opacity="0.68" stroke="#8f9499" stroke-opacity="0.75" stroke-width="1.6"/>
<circle cx="876.4" cy="561.2" r="7.9" fill="#bfc1c4" fill-opacity="0.68" stroke="#8f9499" stroke-opacity="0.75" stroke-width="1.6"/>
<circle cx="1828.6" cy="528" r="7.9" fill="#bfc1c4" fill-opacity="0.68" stroke="#8f9499" stroke-opacity="0.75" stroke-width="1.6"/>
<g clip-path="url(#cp)">
<circle cx="614.7" cy="649" r="7.9" fill="#bfc1c4" fill-opacity="0.68" stroke="#8f9499" stroke-opacity="0.75" stroke-width="1.6"/>
<circle cx="698" cy="649" r="7.9" fill="#bfc1c4" fill-opacity="0.68" stroke="#8f9499" stroke-opacity="0.75" stroke-width="1.6"/>
<circle cx="864.5" cy="649" r="7.9" fill="#bfc1c4" fill-opacity="0.68" stroke="#8f9499" stroke-opacity="0.75" stroke-width="1.6"/>
<circle cx="876.4" cy="649" r="7.9" fill="#bfc1c4" fill-opacity="0.68" stroke="#8f9499" stroke-opacity="0.75" stroke-width="1.6"/>
<circle cx="1828.6" cy="649" r="7.9" fill="#bfc1c4" fill-opacity="0.68" stroke="#8f9499" stroke-opacity="0.75" stroke-width="1.6"/>
<circle cx="698" cy="649" r="7.9" fill="#bfc1c4" fill-opacity="0.68" stroke="#8f9499" stroke-opacity="0.75" stroke-width="1.6"/>
<circle cx="698" cy="649" r="7.9" fill="#bfc1c4" fill-opacity="0.68" stroke="#8f9499" stroke-opacity="0.75" stroke-width="1.6"/>
</g>
<circle cx="864.9" cy="525.5" r="14.6" fill="#fff" stroke="#4a6cf0" stroke-width="1.9"/><circle cx="864.9" cy="525.5" r="8.06" fill="#5577ea"/>
<path d="M2882 198 V222" fill="none" stroke="#1f1f1f" stroke-width="4" />
<path d="M2871.5 212 L2882 222.5 L2892.5 212" fill="none" stroke="#1f1f1f" stroke-width="4" />
<rect x="2768.2" y="668" width="3.80" height="23.60" rx="0" fill="#b0b1b3"/>
<path d="M2791 669.5 L2780.5 680 L2791 690.5" fill="none" stroke="#b0b1b3" stroke-width="3.8" />
<path d="M2849.5 667.5 L2836.5 680 L2849.5 692.5" fill="none" stroke="#b0b1b3" stroke-width="3.8" />
<path d="M2901 667.5 L2914 680 L2901 692.5" fill="none" stroke="#303336" stroke-width="3.8" />
<path d="M2961.5 669.5 L2972 680 L2961.5 690.5" fill="none" stroke="#303336" stroke-width="3.8" />
<rect x="2980" y="668" width="4.00" height="23.60" rx="0" fill="#303336"/>
<path d="M1560.5 783.8 L1582 805 M1582 783.8 L1560.5 805" fill="none" stroke="#3c4043" stroke-width="3.6" />
<path d="M2797.5 801.5 L2808.2 790.8 L2818.9 801.5" fill="none" stroke="#b0b1b3" stroke-width="3.6" />
<path d="M2869.3 789.8 L2880 800.5 L2890.8 789.8" fill="none" stroke="#b0b1b3" stroke-width="3.6" />
<path d="M2941.3 789 L2952 778.3 L2962.7 789 M2941.3 803 L2952 813.7 L2962.7 803" fill="none" stroke="#4d5156" stroke-width="3.6" />
<path d="M565.7 878 H594.2 Q597.7 878 597.7 881.5 V908.3 Q597.7 911.8 594.2 911.8 H565.7 Q562.2 911.8 562.2 908.3 V881.5 Q562.2 878 565.7 878 Z M566 887.7 V908 H594 V887.7 Z" fill="#55585d"/>
<rect x="568.2" y="874" width="3.60" height="5.00" rx="0" fill="#55585d"/>
<rect x="588.2" y="874" width="3.70" height="5.00" rx="0" fill="#55585d"/>
<rect x="570.3" y="892.1" width="3.70" height="3.70" rx="0" fill="#55585d"/>
<rect x="570.3" y="900.1" width="3.70" height="3.70" rx="0" fill="#55585d"/>
<rect x="578.2" y="892.1" width="3.70" height="3.70" rx="0" fill="#55585d"/>
<rect x="578.2" y="900.1" width="3.70" height="3.70" rx="0" fill="#55585d"/>
<rect x="586.1" y="892.1" width="3.70" height="3.70" rx="0" fill="#55585d"/>
<rect x="586.1" y="900.1" width="3.70" height="3.70" rx="0" fill="#55585d"/>
<rect x="1046" y="872.1" width="11.90" height="3.60" rx="0" fill="#55585d"/>
<circle cx="1051.9" cy="895.8" r="16" fill="none" stroke="#55585d" stroke-width="3.6"/>
<rect x="1050.1" y="886.1" width="3.70" height="11.70" rx="0" fill="#55585d"/>
<path d="M1063.6 884.9 L1067.4 881.1" fill="none" stroke="#55585d" stroke-width="3.6" />
<rect x="1345.9" y="877.9" width="10.1" height="12.2" fill="none" stroke="#55585d" stroke-width="3.6"/>
<rect x="1371.8" y="877.9" width="10.4" height="12.2" fill="none" stroke="#55585d" stroke-width="3.6"/>
<rect x="1371.8" y="897.8" width="10.4" height="12.2" fill="none" stroke="#55585d" stroke-width="3.6"/>
<rect x="1357.8" y="882.1" width="12.20" height="3.80" rx="0" fill="#55585d"/>
<rect x="1362.2" y="882.1" width="3.70" height="23.60" rx="0" fill="#55585d"/>
<rect x="1362.2" y="902" width="7.80" height="3.70" rx="0" fill="#55585d"/>
<path d="M2933.8 895.2 H2954.3 L2944 905.4 Z" fill="#1f1f1f"/>
<circle cx="1371.5" cy="967.6" r="13.3" fill="none" stroke="#52565b" stroke-width="2.6"/>
<path d="M1366.9 963.9 Q1366.9 959.3 1371.6 959.3 Q1376.1 959.3 1376.1 963.5 Q1376.1 965.9 1373.7 967.3 Q1372.1 968.3 1372.1 971" fill="none" stroke="#52565b" stroke-width="2.6" />
<rect x="1370.7" y="973" width="2.80" height="2.80" rx="0" fill="#52565b"/>
<path d="M534.2 1010.2 L542.1 1018.2 L550 1010.2" fill="none" stroke="#1f1f1f" stroke-width="3.6" />
<path d="M570.2 1058.2 L578.1 1066.2 L586 1058.2" fill="none" stroke="#1f1f1f" stroke-width="3.6" />
<path d="M606.2 1106.2 L614.1 1114.2 L622 1106.2" fill="none" stroke="#1f1f1f" stroke-width="3.6" />
<path d="M642.2 1202.2 L650.1 1210.2 L658 1202.2" fill="none" stroke="#1f1f1f" stroke-width="3.6" />
<circle cx="2983.6" cy="1063.4" r="9" fill="#eceef0" stroke="#3f5fe0" stroke-width="2"/>
</svg>
</body></html>
